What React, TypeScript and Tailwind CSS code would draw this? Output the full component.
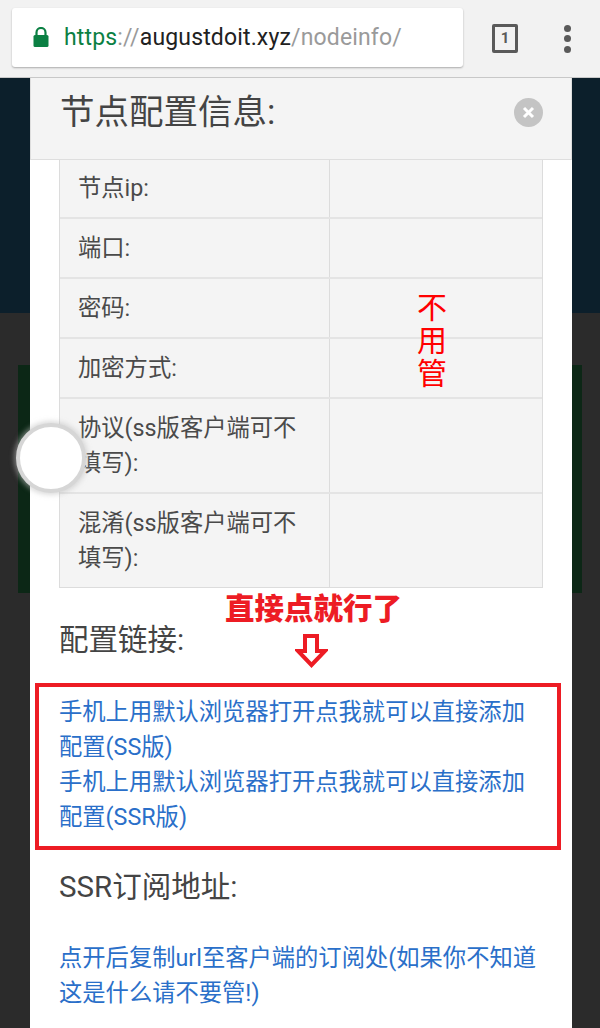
import React from "react";

const cjk = "font-['Roboto','Noto_Sans_CJK_SC',sans-serif]";

const rows = [
  { label: "节点ip:", h: "h-[57px]" },
  { label: "端口:", h: "h-[60px]" },
  { label: "密码:", h: "h-[60px]" },
  { label: "加密方式:", h: "h-[60px]" },
  { label: "协议(ss版客户端可不填写):", h: "h-[95px]" },
  { label: "混淆(ss版客户端可不填写):", h: "h-[95px]" },
];

function AddressBar() {
  return (
    <header className="h-[78px] bg-[#f2f2f2] flex items-center border-b border-[#c8c8c8]">
      <div className="ml-[12px] mb-[2px] w-[451px] h-[59px] bg-white rounded-[3px] shadow-[0_1px_2px_rgba(0,0,0,0.3)] flex items-center pl-[21px]">
        <svg width="16" height="21" viewBox="0 0 16 21" className="mb-[1px]">
          <path d="M3.5 8V5.5a4.500 4.500 0 0 1 9 0V8" fill="none" stroke="#0b8043" strokeWidth="2.2" />
          <rect x="0.5" y="8" width="15" height="12" rx="1.500" fill="#0b8043" />
        </svg>
        <div className="ml-[15px] text-[23px] leading-none whitespace-nowrap font-['Roboto',sans-serif] tracking-[0.15px]">
          <span className="text-[#0b8043]">https</span>
          <span className="text-[#9a9a9a]">://</span>
          <span className="text-[#212121]">augustdoit.xyz</span>
          <span className="text-[#9a9a9a]">/nodeinfo/</span>
        </div>
      </div>
      <div className="ml-[29px] w-[26px] h-[29px] border-[3px] border-[#5a5a5a] rounded-[2px] flex items-center justify-center text-[15px] font-bold text-[#5a5a5a] font-['Roboto',sans-serif] mb-[1px]">
        1
      </div>
      <div className="ml-[46px] flex flex-col gap-[3.500px]">
        <span className="w-[7px] h-[7px] rounded-full bg-[#5a5a5a]" />
        <span className="w-[7px] h-[7px] rounded-full bg-[#5a5a5a]" />
        <span className="w-[7px] h-[7px] rounded-full bg-[#5a5a5a]" />
      </div>
    </header>
  );
}

function Backdrop() {
  return (
    <div className="h-full flex flex-col">
      <div className="h-[235px] bg-[#0c1f2b]" />
      <div className="flex-1 bg-[#2b2b2b] pt-[52px] px-[18px]">
        <div className="h-[228px] bg-[#0c2716]" />
      </div>
    </div>
  );
}

function NodeTable() {
  return (
    <div className="ml-[29px] w-[484px] border-x border-b border-[#dcdcdc] bg-[#f4f4f4]">
      {rows.map((row, i) => (
        <div key={i} className={`flex ${row.h} ${i > 0 ? "border-t-2 border-[#e4e4e4]" : ""}`}>
          <div className="w-[270px] pl-[18px] pr-[26px] flex items-center border-r border-[#dcdcdc] text-[23.300px] leading-[35px] text-[#4a4a4a]">
            <span>{row.label}</span>
          </div>
        </div>
      ))}
    </div>
  );
}

function NodeModal() {
  return (
    <div className={`absolute left-[30px] top-0 w-[542px] h-[950px] overflow-hidden bg-white ${cjk}`}>
      <div className="h-[82px] bg-[#f4f4f4] border-b border-x border-[#dedede] flex items-start justify-between pl-[29px] pr-[28px]">
        <h1 className="text-[34.500px] leading-[40px] mt-[14px] text-[#444] font-normal">节点配置信息:</h1>
        <span className="mt-[20px] w-[29px] h-[29px] rounded-full bg-[#c4c4c4] flex items-center justify-center">
          <svg width="13" height="13" viewBox="0 0 13 13">
            <path d="M2 2l9 9M11 2l-9 9" stroke="#fff" strokeWidth="3" />
          </svg>
        </span>
      </div>
      <NodeTable />
      <h2 className="ml-[29px] mt-[32px] text-[29.500px] leading-[40px] text-[#444] font-normal">配置链接:</h2>
      <div className="mt-[23px] ml-[5px] w-[526px] h-[167px] border-[4px] border-[#ed1c24] pl-[20px] pr-[24px] pt-[8px] text-[23.300px] leading-[35px] text-[#2a6fc9]">
        <p>手机上用默认浏览器打开点我就可以直接添加配置(SS版)</p>
        <p>手机上用默认浏览器打开点我就可以直接添加配置(SSR版)</p>
      </div>
      <h2 className="ml-[29px] mt-[17px] text-[29.500px] leading-[40px] text-[#444] font-normal">SSR订阅地址:</h2>
      <p className="ml-[29px] mr-[20px] mt-[34px] text-[23.300px] leading-[35px] text-[#2a6fc9]">
        点开后复制url至客户端的订阅处(如果你不知道这是什么请不要管!)
      </p>
    </div>
  );
}

export default function App() {
  return (
    <div className={`w-[600px] h-[1028px] overflow-hidden flex flex-col ${cjk}`}>
      <AddressBar />
      <main className="relative flex-1">
        <Backdrop />
        <NodeModal />
        {/* floating ball */}
        <div className="absolute left-[16px] top-[345px] w-[70px] h-[70px] rounded-full bg-white border-[4px] border-[#d6d6d6] shadow-[0_0_5px_2px_rgba(190,190,190,0.55)]" />
        {/* annotations drawn on top of the screenshot */}
        <div className="absolute left-[417px] top-[213px] flex flex-col text-[30px] leading-[33px] text-[#ff0000]">
          <span>不</span>
          <span>用</span>
          <span>管</span>
        </div>
        <div className="absolute left-[225px] top-[513px] text-[29.500px] leading-[36px] font-black text-[#ed1c24] whitespace-nowrap">
          直接点就行了
        </div>
        <svg className="absolute left-[295px] top-[556px]" width="33" height="35" viewBox="0 0 33 35">
          <path d="M10 2h12v15h8L16.500 31 3 17h7z" fill="#fff" stroke="#ed1c24" strokeWidth="4" />
        </svg>
      </main>
    </div>
  );
}
